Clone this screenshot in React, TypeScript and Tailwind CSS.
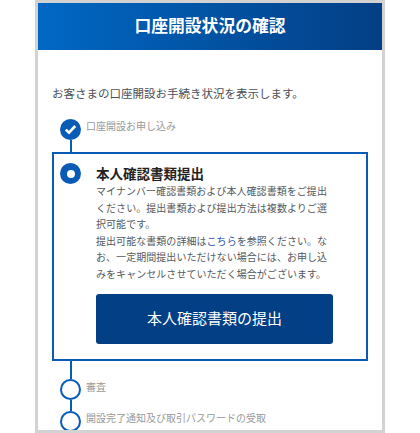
import React from 'react';

const jpFont = "font-['Liberation_Sans','Noto_Sans_CJK_JP',sans-serif]";

const StepDone = () => (
  <div className="w-[21px] h-[21px] rounded-full bg-[#0a5bb5] flex items-center justify-center">
    <svg width="13" height="11" viewBox="0 0 13 11" fill="none">
      <path d="M1.8 5.6 L5 8.6 L11.2 2" stroke="#ffffff" strokeWidth="2.6" />
    </svg>
  </div>
);

const StepOpen = () => <div className="w-[21px] h-[21px] rounded-full bg-white border-2 border-[#0a5bb5] shrink-0" />;

const Connector = ({ h }: { h: string }) => <div className={`w-[2px] bg-[#0a5bb5] ${h}`} />;

export default function App() {
  return (
    <div className={`w-[420px] h-[433px] bg-white overflow-hidden ${jpFont}`}>
      <div className="ml-[35px] w-[350px] h-[433px] border-[3px] border-[#d2d2d2] overflow-hidden">
        <div className="h-[47px] bg-gradient-to-r from-[#0068c4] to-[#033f85] flex items-center justify-center">
          <h1 className="text-[16.8px] font-bold text-white">口座開設状況の確認</h1>
        </div>

        <div className="pl-[14px] pr-[14px]">
          <p className="mt-[36px] text-[11.5px] leading-[17px] text-[#4a4f57] whitespace-nowrap">
            お客さまの口座開設お手続き状況を表示します。
          </p>

          {/* done step */}
          <div className="mt-[16px] ml-[8px] flex gap-[5px]">
            <div className="flex flex-col items-center">
              <StepDone />
              <Connector h="h-[12px]" />
            </div>
            <span className="mt-[1px] text-[10px] leading-[14px] text-[#999999]">口座開設お申し込み</span>
          </div>

          {/* current step */}
          <div className="w-[316px] h-[209px] border-2 border-[#0a5bb5] flex pl-[6px] pt-[9px]">
            <div className="w-[21px] h-[21px] rounded-full bg-[#0a5bb5] flex items-center justify-center shrink-0">
              <div className="w-[8px] h-[8px] rounded-full bg-white" />
            </div>
            <div className="ml-[15px] w-[238px]">
              <h2 className="mt-[3px] text-[13.5px] leading-[18px] font-bold text-[#222222]">本人確認書類提出</h2>
              <p className="text-[10px] leading-[16.5px] tracking-[0.05px] text-[#555a60]">
                マイナンバー確認書類および本人確認書類をご提出ください。提出書類および提出方法は複数よりご選択可能です。
                <br />
                提出可能な書類の詳細は<a className="text-[#2b5cb0]">こちら</a>を参照ください。なお、一定期間提出いただけない場合には、お申し込みをキャンセルさせていただく場合がございます。
              </p>
              <button className="mt-[11px] w-[237px] h-[50px] rounded-[3px] bg-[#033f85] text-white text-[15px]">
                本人確認書類の提出
              </button>
            </div>
          </div>

          {/* remaining steps */}
          <div className="ml-[8px] flex gap-[5px]">
            <div className="flex flex-col items-center">
              <Connector h="h-[18px]" />
              <StepOpen />
              <Connector h="h-[11px]" />
              <StepOpen />
            </div>
            <div className="flex flex-col text-[10px] leading-[14px] text-[#999999]">
              <span className="mt-[20px]">審査</span>
              <span className="mt-[17px] whitespace-nowrap">開設完了通知及び取引パスワードの受取</span>
            </div>
          </div>
        </div>
      </div>
    </div>
  );
}
